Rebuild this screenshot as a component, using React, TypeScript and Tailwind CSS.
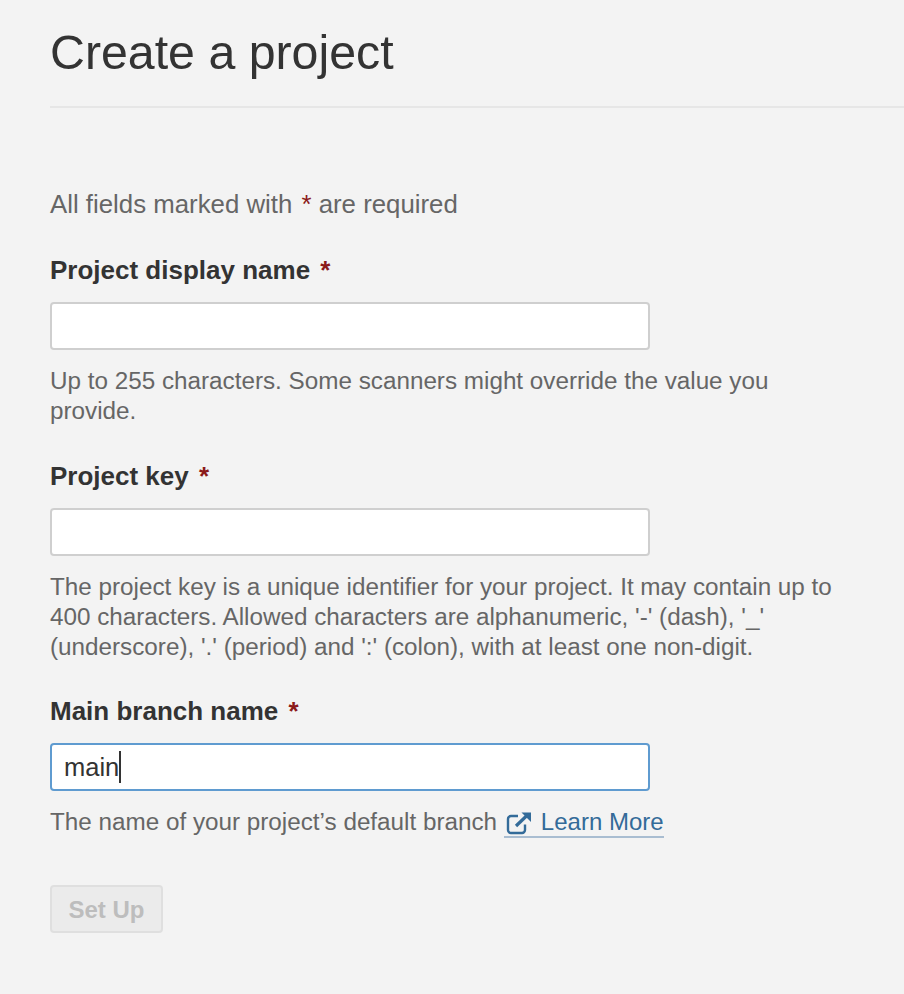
import React from 'react';

const Req = () => <em className="not-italic text-[#8b1a1a] ml-[3px]">*</em>;

type FieldProps = { label: string; value?: string; focused?: boolean; className: string; children: React.ReactNode };

const Field = ({ label, value, focused, className, children }: FieldProps) => (
  <div className={className}>
    <label className="block font-bold text-[26px] leading-[32px] text-[#333] mb-[16px]">
      {label} <Req />
    </label>
    <div
      className={`h-[48px] w-[600px] rounded-[4px] bg-white border-2 flex items-center px-[12px] text-[25.5px] text-[#333] ${focused ? 'border-[#5f9bd0]' : 'border-[#cfcfcf]'}`}
    >
      {value}
      {focused && <span className="w-[2px] h-[32px] bg-[#333]" />}
    </div>
    <div className="mt-[16px] w-[800px] text-[24.25px] leading-[30px] text-[#666]">{children}</div>
  </div>
);

export default function App() {
  return (
    <div className="min-h-[994px] bg-[#f3f3f3] pl-[50px] font-['Liberation_Sans',Arial,sans-serif] overflow-hidden">
      <header className="h-[108px] border-b-2 border-[#e6e6e6] pt-[22px]">
        <h1 className="text-[48.3px] leading-[60px] text-[#333]">Create a project</h1>
      </header>

      <p className="mt-[80px] mb-[34px] text-[25.8px] leading-[32px] text-[#666]">
        All fields marked with <span className="text-[#8b1a1a] ml-[2px]">*</span> are required
      </p>

      <Field label="Project display name" className="mb-[34px]">
        Up to 255 characters. Some scanners might override the value you provide.
      </Field>
      <Field label="Project key" className="mb-[33px]">
        The project key is a unique identifier for your project. It may contain up to 400 characters. Allowed characters are alphanumeric, '-' (dash), '_' (underscore), '.' (period) and ':' (colon), with at least one non-digit.
      </Field>
      <Field label="Main branch name" value="main" focused className="mb-[48px]">
        The name of your project’s default branch{' '}
        <a className="text-[#336b99] text-[24px] border-b-2 border-[#a9bdd1] pb-[1px]">
          <svg className="inline-block align-[-5px] mr-[9px] ml-[2px]" width="26" height="24" viewBox="0 0 26 24" fill="none" stroke="#336b99" strokeWidth="2.4">
            <path d="M19 13.5V19a3 3 0 0 1-3 3H5a3 3 0 0 1-3-3V8a3 3 0 0 1 3-3h7" />
            <path d="M10 15 L22 3.5" strokeWidth="3.2" />
            <path d="M15.5 1.5h9.5V11z" fill="#336b99" stroke="none" />
          </svg>
          Learn More
        </a>
      </Field>

      <button
        disabled
        className="block h-[48px] w-[113px] rounded-[4px] border-2 border-[#dfdfdf] bg-[#ebebeb] pt-[1px] text-[24px] font-bold text-[#bdbdbd]"
      >
        Set Up
      </button>
    </div>
  );
}
